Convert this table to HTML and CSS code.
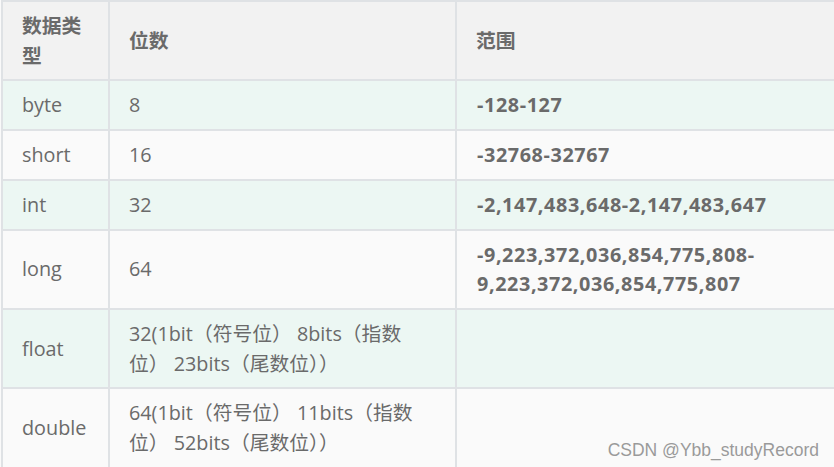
FILE: index.html
```html
<!DOCTYPE html>
<html lang="zh-CN">
<head>
<meta charset="utf-8">
<title>数据类型</title>
<link rel="stylesheet" href="styles.css">
</head>
<body>
<div class="page">
  <table class="types">
    <thead>
      <tr>
        <th class="c1">数据类型</th>
        <th class="c2">位数</th>
        <th class="c3">范围</th>
      </tr>
    </thead>
    <tbody>
      <tr class="alt">
        <td>byte</td>
        <td>8</td>
        <td class="range">-128-127</td>
      </tr>
      <tr>
        <td>short</td>
        <td>16</td>
        <td class="range">-32768-32767</td>
      </tr>
      <tr class="alt">
        <td>int</td>
        <td>32</td>
        <td class="range">-2,147,483,648-2,147,483,647</td>
      </tr>
      <tr>
        <td>long</td>
        <td>64</td>
        <td class="range">-9,223,372,036,854,775,808-9,223,372,036,854,775,807</td>
      </tr>
      <tr class="alt">
        <td>float</td>
        <td>32(1bit（符号位） 8bits（指数位） 23bits（尾数位））</td>
        <td class="range"></td>
      </tr>
      <tr>
        <td>double</td>
        <td>64(1bit（符号位） 11bits（指数位） 52bits（尾数位））</td>
        <td class="range"></td>
      </tr>
    </tbody>
  </table>
  <div class="watermark">CSDN @Ybb_studyRecord</div>
</div>
</body>
</html>
```

FILE: styles.css
```css
html, body {
  margin: 0;
  padding: 0;
  background: #fafafa;
}

body {
  width: 834px;
  height: 467px;
  overflow: hidden;
}

.page {
  position: relative;
  width: 834px;
  height: 467px;
  overflow: hidden;
}

.types {
  margin-left: 1px;
  width: 900px;
  table-layout: fixed;
  border-collapse: separate;
  border-spacing: 0;
  border-top: 2px solid #dfe2e5;
  border-left: 2px solid #dfe2e5;
  font-family: "Open Sans", "Noto Sans CJK SC", sans-serif;
  font-size: 19.8px;
  line-height: 29.7px;
  color: #6a6a6a;
}

.types th,
.types td {
  box-sizing: border-box;
  padding: 9px 20px 9px 19px;
  border-right: 2px solid #dfe2e5;
  border-bottom: 2px solid #dfe2e5;
  text-align: left;
  vertical-align: middle;
  background: #fafafa;
}

.types th {
  font-weight: 700;
  background: #f2f2f2;
}

.types .c1 { width: 107px; }
.types .c2 { width: 347px; }
.types .c3 { width: 446px; }

.types tr.alt td {
  background: #ecf7f3;
}

.types .range {
  font-weight: 700;
  padding-left: 20px;
  letter-spacing: 0.6px;
}

.watermark {
  position: absolute;
  right: 15px;
  bottom: 7px;
  font-family: "Liberation Sans", Arial, sans-serif;
  font-size: 17.5px;
  line-height: 20px;
  color: #9a9a9a;
}
```
